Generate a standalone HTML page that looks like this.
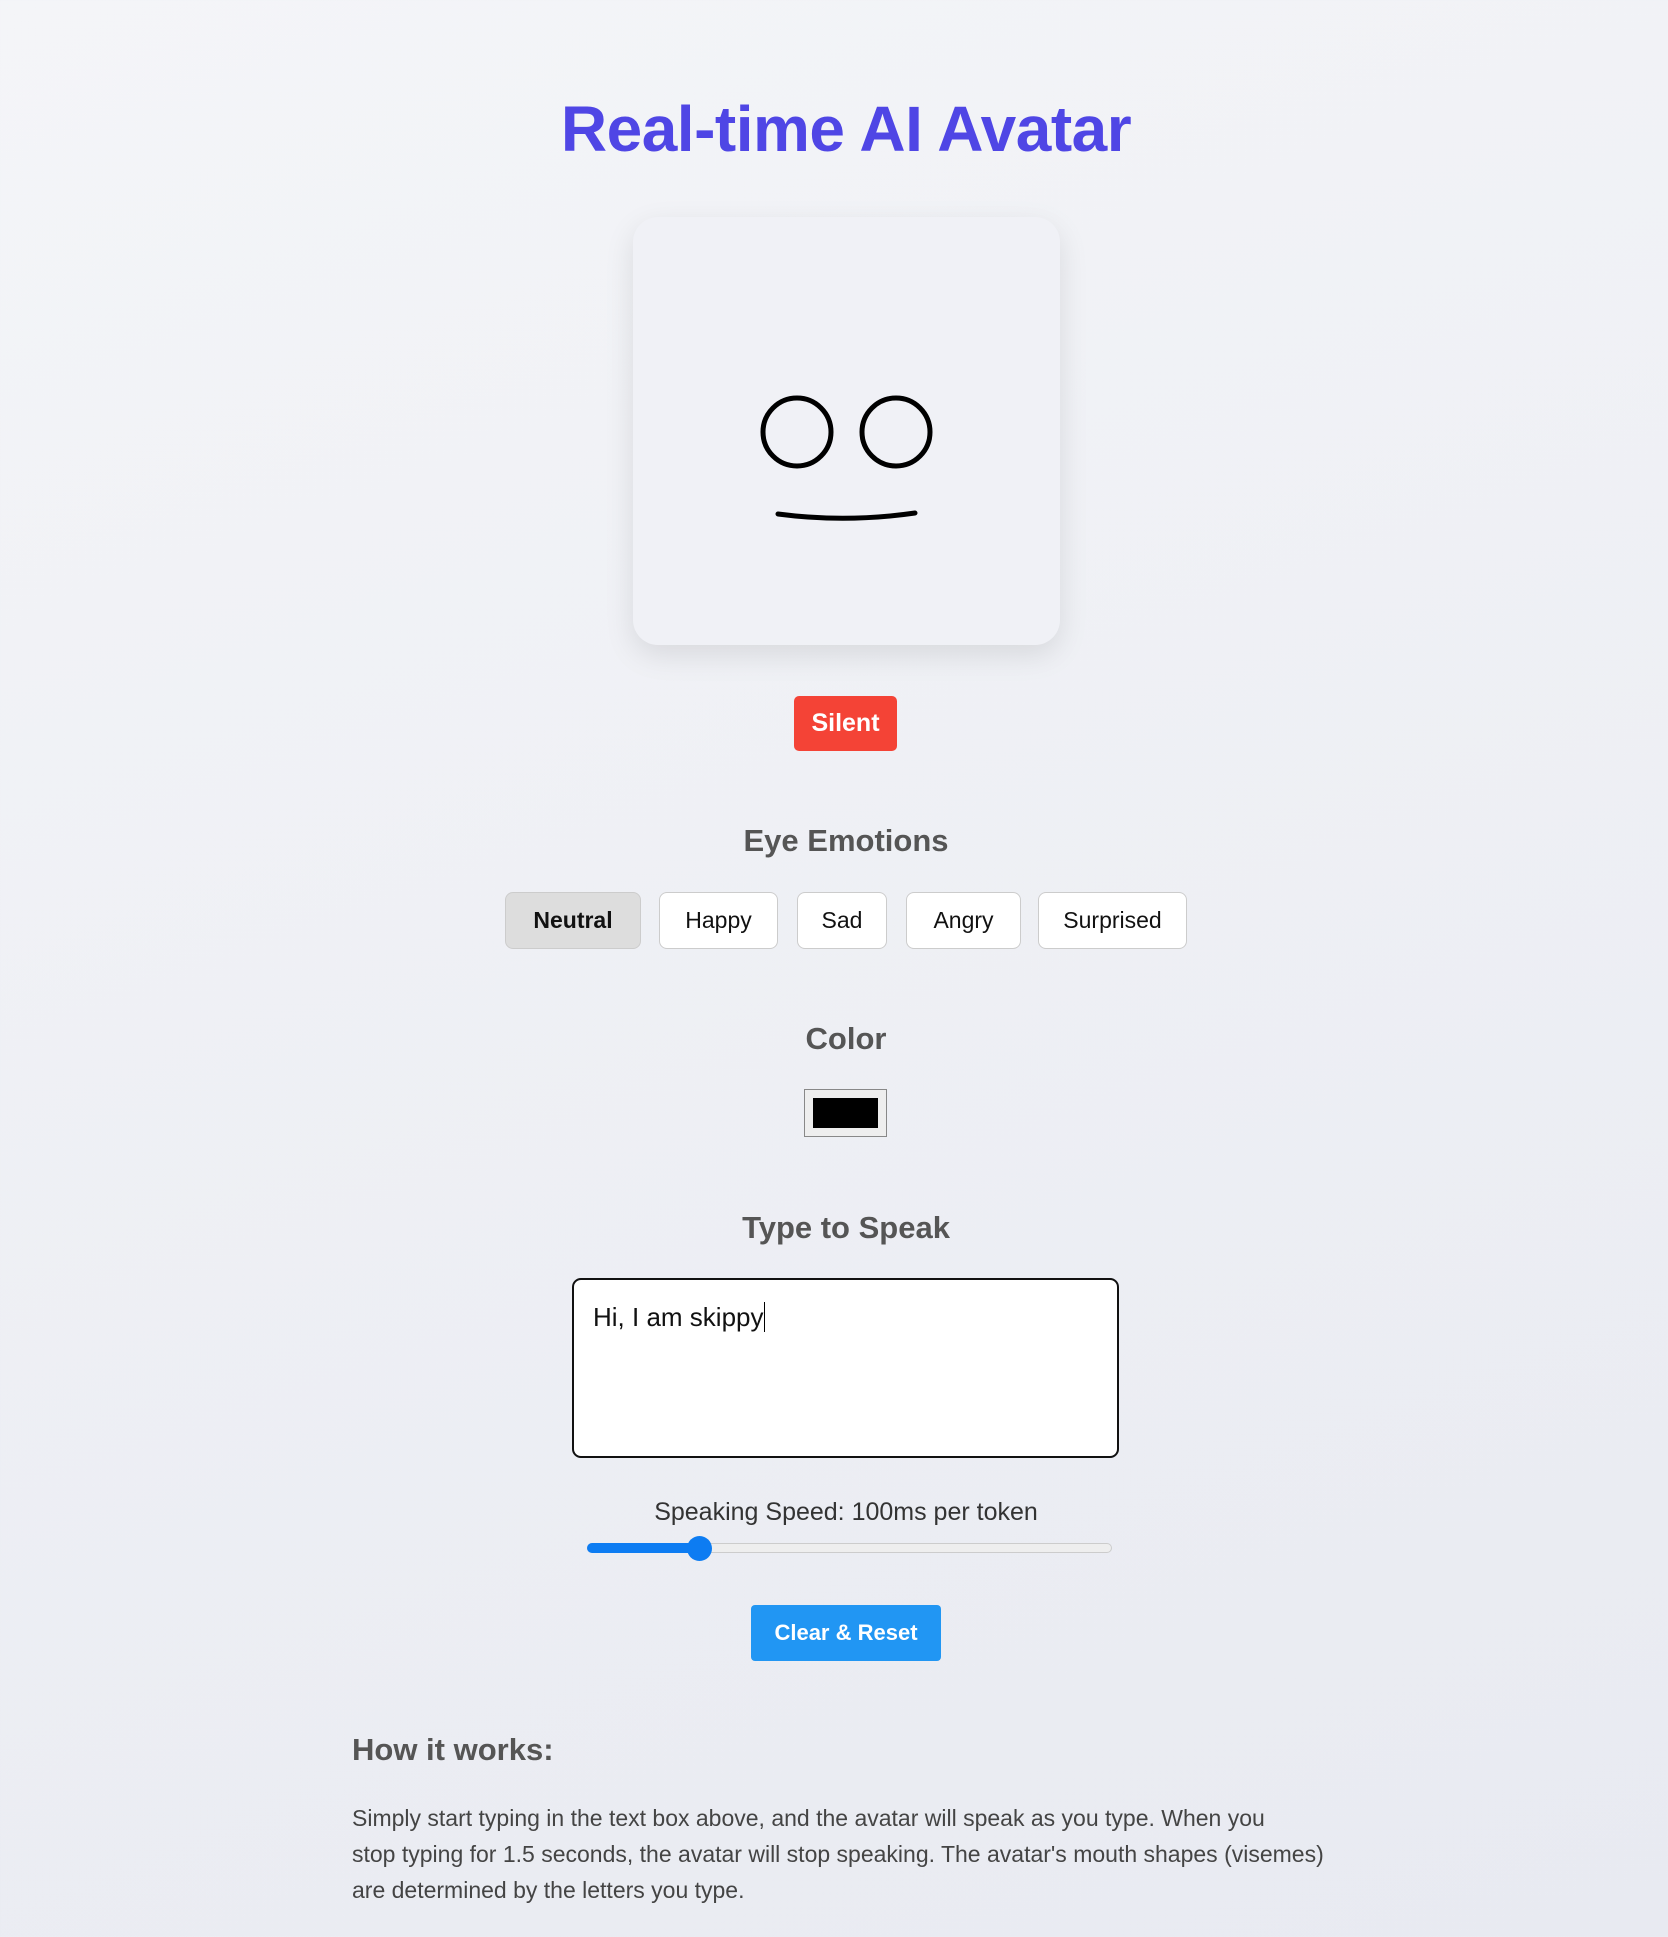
<!DOCTYPE html>
<html><head><meta charset="utf-8"><style>
*{box-sizing:border-box;margin:0;padding:0}
body{width:1668px;height:1937px;overflow:hidden;font-family:"Liberation Sans",sans-serif;background:linear-gradient(160deg,#f4f5f8,#e8eaf1);position:relative;color:#333}
.abs{position:absolute}
h1{position:absolute;left:12px;width:1668px;text-align:center;top:92px;font-size:64px;color:#4f46e5;font-weight:bold;letter-spacing:-0.5px}
.box{left:633px;top:217px;width:427px;height:428px;border-radius:25px;background:#f0f1f6;box-shadow:0 10px 30px rgba(0,0,0,0.1)}
.badge{left:794px;top:696px;width:103px;height:55px;background:#f44336;color:#fff;font-weight:bold;font-size:25px;border-radius:5px;text-align:center;line-height:55px}
.h{left:12px;width:1668px;text-align:center;font-size:31px;font-weight:bold;color:#555}
.btn{top:892px;height:57px;border:1px solid #ccc;border-radius:8px;background:#fff;font-size:23px;text-align:center;line-height:55px;color:#111}
.ta{left:572px;top:1278px;width:547px;height:180px;border:2px solid #111;border-radius:9px;background:#fff;font-size:26px;padding:22px 19px;color:#111}
p{left:352px;top:1800px;white-space:nowrap;font-size:23px;line-height:36px;color:#444}
</style></head><body>
<h1>Real-time AI Avatar</h1>
<div class="abs box"></div>
<svg class="abs" style="left:633px;top:217px" width="427" height="428">
<circle cx="164" cy="215" r="34" fill="none" stroke="#000" stroke-width="5"/>
<circle cx="263" cy="215" r="34" fill="none" stroke="#000" stroke-width="5"/>
<path d="M145 297 Q213 306 282 296" fill="none" stroke="#000" stroke-width="5" stroke-linecap="round"/>
</svg>
<div class="abs badge">Silent</div>
<div class="abs h" style="top:823px">Eye Emotions</div>
<div class="abs btn" style="left:505px;width:136px;background:#ddd;font-weight:bold">Neutral</div>
<div class="abs btn" style="left:659px;width:119px">Happy</div>
<div class="abs btn" style="left:797px;width:90px">Sad</div>
<div class="abs btn" style="left:906px;width:115px">Angry</div>
<div class="abs btn" style="left:1038px;width:149px">Surprised</div>
<div class="abs h" style="top:1021px">Color</div>
<div class="abs" style="left:804px;top:1089px;width:83px;height:48px;border:1px solid #888;background:#eee;padding:8px 8px"><div style="background:#000;width:100%;height:100%"></div></div>
<div class="abs h" style="top:1210px">Type to Speak</div>
<div class="abs ta">Hi, I am skippy<span style="border-left:1px solid #000"></span></div>
<div class="abs" style="left:12px;width:1668px;text-align:center;top:1498px;font-size:25px;color:#333">Speaking Speed: 100ms per token</div>
<div class="abs" style="left:587px;top:1543px;width:525px;height:10px;border-radius:5px;background:#eee;border:1px solid #ccc"></div>
<div class="abs" style="left:587px;top:1543px;width:112px;height:10px;border-radius:5px;background:#0d7cf2"></div>
<div class="abs" style="left:687px;top:1536px;width:25px;height:25px;border-radius:50%;background:#0d7cf2"></div>
<div class="abs" style="left:751px;top:1605px;width:190px;height:56px;background:#2196f3;color:#fff;font-weight:bold;font-size:22px;text-align:center;line-height:56px;border-radius:4px">Clear &amp; Reset</div>
<div class="abs" style="left:352px;top:1732px;font-size:31px;font-weight:bold;color:#555">How it works:</div>
<p class="abs">Simply start typing in the text box above, and the avatar will speak as you type. When you<br>stop typing for 1.5 seconds, the avatar will stop speaking. The avatar's mouth shapes (visemes)<br>are determined by the letters you type.</p>
</body></html>
